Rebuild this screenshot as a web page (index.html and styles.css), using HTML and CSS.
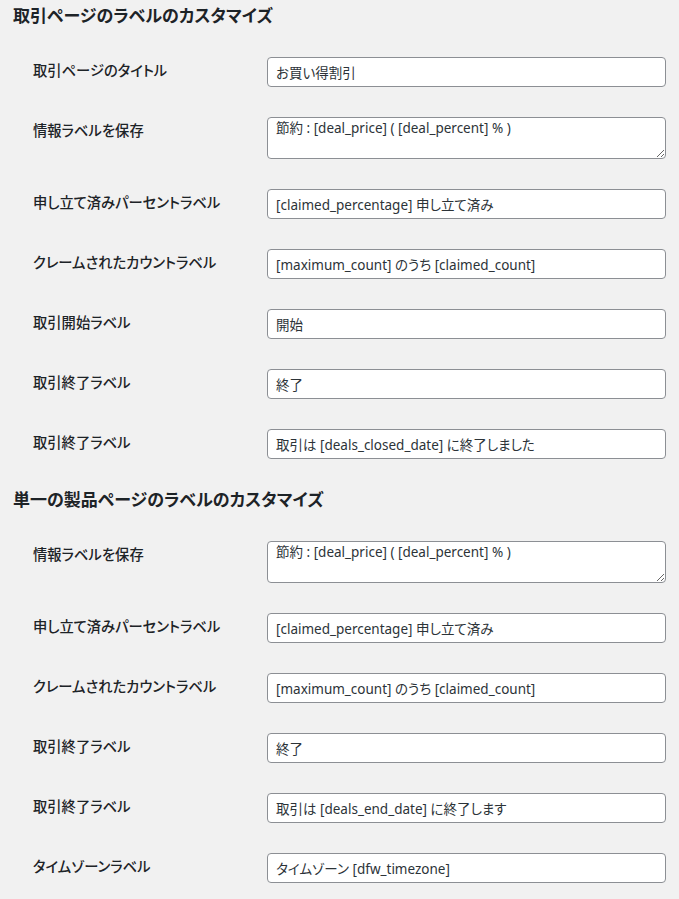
FILE: index.html
```html
<!DOCTYPE html>
<html lang="ja">
<head>
<meta charset="utf-8">
<title>ラベルのカスタマイズ</title>
<link rel="stylesheet" href="styles.css">
</head>
<body>
<div class="page">
  <section class="section">
    <h2 class="section-title">取引ページのラベルのカスタマイズ</h2>
    <div class="form-table">
      <div class="row">
        <label class="row-label">取引ページのタイトル</label>
        <div class="row-field"><input class="text-input" type="text" value="お買い得割引"></div>
      </div>
      <div class="row">
        <label class="row-label">情報ラベルを保存</label>
        <div class="row-field"><textarea class="text-area">節約 : [deal_price] ( [deal_percent] % )</textarea></div>
      </div>
      <div class="row">
        <label class="row-label">申し立て済みパーセントラベル</label>
        <div class="row-field"><input class="text-input" type="text" value="[claimed_percentage] 申し立て済み"></div>
      </div>
      <div class="row">
        <label class="row-label">クレームされたカウントラベル</label>
        <div class="row-field"><input class="text-input" type="text" value="[maximum_count] のうち [claimed_count]"></div>
      </div>
      <div class="row">
        <label class="row-label">取引開始ラベル</label>
        <div class="row-field"><input class="text-input" type="text" value="開始"></div>
      </div>
      <div class="row">
        <label class="row-label">取引終了ラベル</label>
        <div class="row-field"><input class="text-input" type="text" value="終了"></div>
      </div>
      <div class="row">
        <label class="row-label">取引終了ラベル</label>
        <div class="row-field"><input class="text-input" type="text" value="取引は [deals_closed_date] に終了しました"></div>
      </div>
    </div>
  </section>
  <section class="section">
    <h2 class="section-title">単一の製品ページのラベルのカスタマイズ</h2>
    <div class="form-table">
      <div class="row">
        <label class="row-label">情報ラベルを保存</label>
        <div class="row-field"><textarea class="text-area">節約 : [deal_price] ( [deal_percent] % )</textarea></div>
      </div>
      <div class="row">
        <label class="row-label">申し立て済みパーセントラベル</label>
        <div class="row-field"><input class="text-input" type="text" value="[claimed_percentage] 申し立て済み"></div>
      </div>
      <div class="row">
        <label class="row-label">クレームされたカウントラベル</label>
        <div class="row-field"><input class="text-input" type="text" value="[maximum_count] のうち [claimed_count]"></div>
      </div>
      <div class="row">
        <label class="row-label">取引終了ラベル</label>
        <div class="row-field"><input class="text-input" type="text" value="終了"></div>
      </div>
      <div class="row">
        <label class="row-label">取引終了ラベル</label>
        <div class="row-field"><input class="text-input" type="text" value="取引は [deals_end_date] に終了します"></div>
      </div>
      <div class="row">
        <label class="row-label">タイムゾーンラベル</label>
        <div class="row-field"><input class="text-input" type="text" value="タイムゾーン [dfw_timezone]"></div>
      </div>
    </div>
  </section>
</div>
</body>
</html>
```
FILE: styles.css
```css
html, body {
  margin: 0;
  padding: 0;
  background: #f1f1f1;
}
body {
  font-family: "Noto Sans", "Noto Sans CJK JP", sans-serif;
  color: #1d2327;
  font-size: 14px;
  font-feature-settings: "palt" 1;
}
.page {
  padding: 5px 0 0 13px;
}
.section + .section .section-title {
  margin-top: 15px;
}
.section-title {
  margin: 0;
  font-size: 17px;
  line-height: 22px;
  font-weight: 600;
  color: #1d2327;
}
.form-table {
  margin-top: 15px;
}
.row {
  display: flex;
  align-items: flex-start;
  padding: 15px 0;
}
.row-label {
  box-sizing: border-box;
  width: 254px;
  padding-left: 20px;
  padding-top: 5px;
  font-size: 14.3px;
  line-height: 18px;
  font-weight: 500;
  color: #1d2327;
}
.row-field {
  width: 399px;
}
.text-input,
.text-area {
  box-sizing: border-box;
  display: block;
  width: 399px;
  margin: 0;
  background: #fff;
  border: 1px solid #8c8f94;
  border-radius: 4px;
  font-family: "Noto Sans", "Noto Sans CJK JP", sans-serif;
  font-feature-settings: "palt" 1;
  font-size: 13.5px;
  color: #2c3338;
  padding: 0 8px;
}
.text-input {
  height: 30px;
  line-height: 28px;
}
.text-area {
  height: 42px;
  line-height: 20px;
  padding-top: 0;
  resize: vertical;
}
```
